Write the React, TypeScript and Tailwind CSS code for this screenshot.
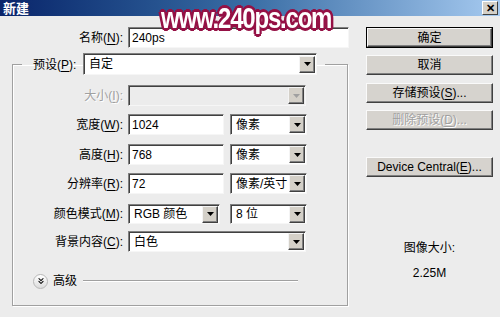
import React from "react";
import { ChevronsDown } from "lucide-react";

const font = "[font-family:'Liberation_Sans','Noto_Sans_CJK_SC',sans-serif]";

function Arrow({ disabled }: { disabled?: boolean }) {
  return (
    <div className="mr-[1px] flex h-[17px] w-[16px] items-center justify-center border border-t-[#f4f4f4] border-l-[#f4f4f4] border-r-[#404040] border-b-[#404040] bg-[#d4d0c8] shadow-[inset_-1px_-1px_0_#808080]">
      <svg width="7" height="4" viewBox="0 0 7 4">
        <polygon points="0,0 7,0 3.5,4" fill={disabled ? "#a0a0a0" : "#000"} />
      </svg>
    </div>
  );
}

function Sunken({ children, className }: { children?: React.ReactNode; className: string }) {
  return (
    <div
      className={`flex items-center border border-t-[#808080] border-l-[#808080] border-r-[#f6f6f6] border-b-[#f6f6f6] shadow-[inset_1px_1px_0_#404040] ${className}`}
    >
      {children}
    </div>
  );
}

function Input({ value, className }: { value: string; className: string }) {
  return (
    <Sunken className={`bg-white pl-[3px] text-[12px] text-black ${className}`}>
      {value}
    </Sunken>
  );
}

function Select({ value, className, disabled }: { value?: string; className: string; disabled?: boolean }) {
  return (
    <Sunken className={`justify-between ${disabled ? "bg-[#ececec]" : "bg-white"} ${className}`}>
      <span className="pl-[5px] text-[12px] text-black whitespace-nowrap">{value}</span>
      <Arrow disabled={disabled} />
    </Sunken>
  );
}

function Label({ text, k, disabled }: { text: string; k: string; disabled?: boolean }) {
  return (
    <span className={`whitespace-nowrap text-[12px] ${disabled ? "text-[#a0a0a0] [text-shadow:1px_1px_0_#fff]" : "text-black"}`}>
      {text}(<span className="underline underline-offset-2">{k}</span>):
    </span>
  );
}

function Row({ label, k, disabled, className, children }: { label: string; k: string; disabled?: boolean; className: string; children: React.ReactNode }) {
  return (
    <div className={`flex items-center ${className}`}>
      <div className="flex w-[110px] justify-end">
        <Label text={label} k={k} disabled={disabled} />
      </div>
      <div className="ml-[5px] flex items-center">{children}</div>
    </div>
  );
}

function Btn({ children, primary, disabled, className }: { children: React.ReactNode; primary?: boolean; disabled?: boolean; className: string }) {
  const inner = (
    <div
      className={`flex h-full w-full items-center justify-center border border-t-[#fafafa] border-l-[#fafafa] border-r-[#404040] border-b-[#404040] bg-[#d6d3ce] shadow-[inset_-1px_-1px_0_#808080] text-[12px] ${disabled ? "text-[#a0a0a0] [text-shadow:1px_1px_0_#fff]" : "text-black"}`}
    >
      {children}
    </div>
  );
  return (
    <div className={`w-[127px] ${primary ? "border border-black" : ""} ${className}`}>{inner}</div>
  );
}

export default function App() {
  return (
    <div className={`relative h-[317px] w-[500px] overflow-hidden bg-[#ececec] ${font}`}>
      {/* title bar */}
      <div className="flex h-[16px] items-center justify-between bg-gradient-to-r from-[#0a246a] via-[#3a6ea5] to-[#a6caf0]">
        <span className="pl-[3px] text-[13px] font-bold leading-none text-white">新建</span>
        <div className="mr-[2px] flex h-[14px] w-[16px] items-center justify-center border border-t-white border-l-white border-r-[#404040] border-b-[#404040] bg-[#d4d0c8] text-[11px] font-bold leading-none text-black">
          ✕
        </div>
      </div>

      {/* watermark */}
      <div className="absolute left-[161px] top-[-5px] origin-left scale-x-[0.8] text-[30px] font-bold tracking-[-1.5px] text-white [text-shadow:3px_0_0_#951145,-3px_0_0_#951145,0_3px_0_#951145,0_-3px_0_#951145,2px_2px_0_#951145,-2px_-2px_0_#951145,2px_-2px_0_#951145,-2px_2px_0_#951145]">
        www.240ps.com
      </div>

      <div className="flex">
        {/* left */}
        <div className="w-[350px]">
          <div className="mt-[11px] flex items-center">
            <div className="flex w-[123px] justify-end">
              <Label text="名称" k="N" />
            </div>
            <Input value="240ps" className="ml-[5px] h-[21px] w-[221px]" />
          </div>

          <fieldset className="ml-[12px] mt-[4px] w-[336px] border border-[#a0a0a0] pb-[15px] shadow-[1px_1px_0_#fff,inset_1px_1px_0_#fff]">
            <legend className="ml-[9px] flex items-center pl-[11px] pr-[8px]">
              <span className="w-[45px]">
                <Label text="预设" k="P" />
              </span>
              <Select value="自定" className="ml-[5px] h-[22px] w-[234px]" />
            </legend>

            <Row label="大小" k="I" disabled className="mt-[9px]">
              <Select disabled className="h-[21px] w-[178px]" />
            </Row>
            <Row label="宽度" k="W" className="mt-[8px]">
              <Input value="1024" className="h-[21px] w-[96px]" />
              <Select value="像素" className="ml-[6px] h-[21px] w-[77px]" />
            </Row>
            <Row label="高度" k="H" className="mt-[9px]">
              <Input value="768" className="h-[21px] w-[96px]" />
              <Select value="像素" className="ml-[6px] h-[21px] w-[77px]" />
            </Row>
            <Row label="分辨率" k="R" className="mt-[8px]">
              <Input value="72" className="h-[21px] w-[96px]" />
              <Select value="像素/英寸" className="ml-[6px] h-[21px] w-[77px]" />
            </Row>
            <Row label="颜色模式" k="M" className="mt-[10px]">
              <Select value="RGB 颜色" className="h-[20px] w-[92px]" />
              <Select value="8 位" className="ml-[10px] h-[20px] w-[77px]" />
            </Row>
            <Row label="背景内容" k="C" className="mt-[7px]">
              <Select value="白色" className="h-[21px] w-[178px]" />
            </Row>

            <div className="mt-[20px] flex items-center pl-[20px]">
              <div className="flex h-[15px] w-[15px] items-center justify-center rounded-full border border-[#b8b8b8] bg-gradient-to-b from-white to-[#dcdcdc]">
                <ChevronsDown size={10} strokeWidth={2.5} className="text-black" />
              </div>
              <span className="ml-[5px] text-[12px] text-black">高级</span>
              <div className="ml-[6px] h-[2px] w-[215px] border-t border-t-[#a0a0a0] border-b border-b-white" />
            </div>
          </fieldset>
        </div>

        {/* right */}
        <div className="ml-[16px] flex w-[127px] flex-col">
          <Btn primary className="mt-[11px] h-[21px]">确定</Btn>
          <Btn className="mt-[7px] h-[20px]">取消</Btn>
          <Btn className="mt-[8px] h-[20px]">
            存储预设(<span className="underline underline-offset-2">S</span>)...
          </Btn>
          <Btn disabled className="mt-[7px] h-[20px]">
            删除预设(<span className="underline underline-offset-2">D</span>)...
          </Btn>
          <Btn className="mt-[27px] h-[20px]">
            Device Central(<span className="underline underline-offset-2">E</span>)...
          </Btn>
          <div className="mt-[65px] text-center text-[12px] leading-none text-black">图像大小:</div>
          <div className="mt-[13px] text-center text-[12px] leading-none text-black">2.25M</div>
        </div>
      </div>
    </div>
  );
}
